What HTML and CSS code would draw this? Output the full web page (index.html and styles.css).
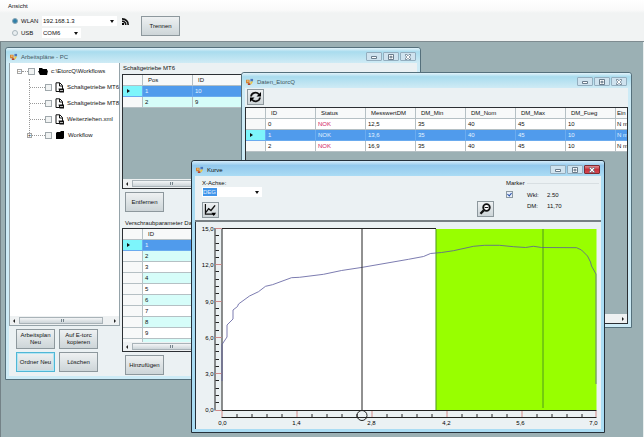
FILE: index.html
```html
<!DOCTYPE html>
<html lang="de">
<head>
<meta charset="utf-8">
<title>EtorcQ</title>
<link rel="stylesheet" href="styles.css">
</head>
<body>
<svg class="defs" aria-hidden="true">
  <symbol id="app" viewBox="0 0 9 8"><path fill="#d9822b" d="M0 2h4v4H0z"/><path fill="#f3e3b0" d="M1 3h2v1H1z"/><path fill="#b4432c" d="M2 6h3v2H2z"/><path fill="#4a78c0" d="M5 1h3v3H5z"/><path fill="#f0c63c" d="M5 4h3l-2 3H5z"/></symbol>
  <symbol id="folder" viewBox="0 0 10 8"><path d="M1 2l1-1h3l1-1h3v7L8 8H1z"/></symbol>
  <symbol id="folder-open" viewBox="0 0 10 8"><path d="M1 3V1h3l1 1h4v1.500h1L9 8H2L0 4h1z"/></symbol>
  <symbol id="file" viewBox="0 0 9 11"><path fill="#fff" stroke="#111" d="M1 .8h3.800L7.500 3.500V9.500H1z"/><path fill="none" stroke="#111" d="M4.500 1v3h3"/><path fill="#111" d="M3.500 6.500H9V10.500H4.500z"/><path stroke="#fff" stroke-width=".7" d="M5 8.500h3"/></symbol>
  <symbol id="min" viewBox="0 0 8 6"><path fill="#fff" stroke="#5c6f80" stroke-width=".9" d="M1.500 2.500h5v2h-5z"/></symbol>
  <symbol id="max" viewBox="0 0 8 6"><path fill="#fff" stroke="#5c6f80" stroke-width=".9" d="M1.500.5h5v5h-5zM3 2.300h2v1.500H3z"/></symbol>
  <symbol id="close" viewBox="0 0 8 6"><path fill="#fff" stroke="#5c6f80" stroke-width=".8" d="M1.500.5h1.300L4 1.700 5.200.5h1.300v1L5.300 3l1.200 1.500v1H5.200L4 4.300 2.800 5.500H1.500v-1L2.700 3 1.500 1.500z"/></symbol>
</svg>

<header class="top">
  <nav><a class="menu" href="#">Ansicht</a></nav>
  <div class="connect">
    <div class="ports">
      <div class="port">
        <input type="radio" name="port" id="wlan" checked><label for="wlan">WLAN</label>
        <span class="combo wide"><select aria-label="IP-Adresse"><option>192.168.1.3</option></select></span>
        <svg class="signal" viewBox="0 0 7 7"><path d="M0 5h2v2H0z"/><path fill="none" stroke="#111" stroke-width="1.600" d="M0 3.200Q3.700 3.300 3.800 7M0 .9Q6 1.200 6.200 7"/></svg>
      </div>
      <div class="port">
        <input type="radio" name="port" id="usb"><label for="usb">USB</label>
        <span class="combo"><select aria-label="USB-Port"><option>COM6</option></select></span>
      </div>
    </div>
    <button class="btn">Trennen</button>
  </div>
</header>

<main class="desktop">
  <section class="window plans">
    <div class="titlebar"><svg class="app"><use href="#app"/></svg><span>Arbeitspläne - PC</span>
      <div class="caption"><button aria-label="Minimieren"><svg><use href="#min"/></svg></button><button aria-label="Maximieren"><svg><use href="#max"/></svg></button><button aria-label="Schließen"><svg><use href="#close"/></svg></button></div></div>
    <div class="client split">
      <div class="left">
        <div class="treebox">
          <ul class="tree">
            <li><i class="twist">−</i><i class="dash"></i><input type="checkbox" id="t0"><svg class="ico"><use href="#folder-open"/></svg><label for="t0">c:\EtorcQ\Workflows</label>
              <ul>
                <li><i class="dash long"></i><input type="checkbox" id="t1"><svg class="ico file"><use href="#file"/></svg><label for="t1">Schaltgetriebe MT6</label></li>
                <li><i class="dash long"></i><input type="checkbox" id="t2"><svg class="ico file"><use href="#file"/></svg><label for="t2">Schaltgetriebe MT8</label></li>
                <li><i class="dash long"></i><input type="checkbox" id="t3"><svg class="ico file"><use href="#file"/></svg><label for="t3">Weiterziehen.xml</label></li>
                <li class="last"><i class="twist">+</i><i class="dash mid"></i><input type="checkbox" id="t4"><svg class="ico"><use href="#folder"/></svg><label for="t4">Workflow</label></li>
              </ul>
            </li>
          </ul>
          <div class="scroll"><i class="prev"></i><b></b><i class="next"></i></div>
        </div>
        <div class="actions">
          <button class="btn">Arbeitsplan<br>Neu</button><button class="btn">Auf E-torc<br>kopieren</button>
          <button class="btn focus">Ordner Neu</button><button class="btn">Löschen</button>
        </div>
      </div>
      <div class="right">
        <h2>Schaltgetriebe MT6</h2>
        <div class="gridbox steps">
          <table class="grid">
            <colgroup><col class="mark"><col class="c"><col class="c"><col></colgroup>
            <thead><tr><th></th><th>Pos</th><th>ID</th><th></th></tr></thead>
            <tbody><tr class="sel"><td></td><td>1</td><td>10</td><td></td></tr><tr class="alt"><td></td><td>2</td><td>9</td><td></td></tr></tbody>
          </table>
          <div class="scroll"><i class="prev"></i><b></b><i class="next"></i></div>
        </div>
        <button class="btn">Entfernen</button>
        <h2 class="inset">Verschraubparameter Daten</h2>
        <div class="gridbox params">
          <div class="rows">
          <table class="grid">
            <colgroup><col class="mark"><col></colgroup>
            <thead><tr><th></th><th>ID</th></tr></thead>
            <tbody><tr class="sel"><td></td><td>1</td></tr><tr class="alt"><td></td><td>2</td></tr><tr><td></td><td>3</td></tr><tr class="alt"><td></td><td>4</td></tr><tr><td></td><td>5</td></tr><tr class="alt"><td></td><td>6</td></tr><tr><td></td><td>7</td></tr><tr class="alt"><td></td><td>8</td></tr><tr><td></td><td>9</td></tr><tr class="alt"><td></td><td>10</td></tr></tbody>
          </table>
          </div>
          <div class="scroll"><i class="prev"></i><b></b><i class="next"></i></div>
        </div>
        <button class="btn">Hinzufügen</button>
      </div>
    </div>
  </section>

  <section class="window data">
    <div class="titlebar"><svg class="app"><use href="#app"/></svg><span>Daten_EtorcQ</span>
      <div class="caption"><button aria-label="Minimieren"><svg><use href="#min"/></svg></button><button aria-label="Maximieren"><svg><use href="#max"/></svg></button><button aria-label="Schließen"><svg><use href="#close"/></svg></button></div></div>
    <div class="client stack">
      <button class="btn tool" aria-label="Aktualisieren"><svg viewBox="0 0 12 12"><path fill="none" stroke="#111" stroke-width="1.800" d="M1.500 5.500C2 1.500 7 .5 9.500 3.300M10.500 6.500C10 10.500 5 11.500 2.500 8.700"/><path d="M11.500 1v4.500H7zM.5 11V6.500H5z"/></svg></button>
      <div class="gridbox">
        <table class="grid">
          <colgroup><col class="mark"><col class="c"><col class="c"><col class="c"><col class="c"><col class="c"><col class="c"><col class="c"><col></colgroup>
          <thead><tr><th></th><th>ID</th><th>Status</th><th>MesswertDM</th><th>DM_Min</th><th>DM_Nom</th><th>DM_Max</th><th>DM_Fueg</th><th class="edge">Ein</th></tr></thead>
          <tbody>
            <tr><td></td><td>0</td><td class="nok">NOK</td><td>12,5</td><td>35</td><td>40</td><td>45</td><td>10</td><td class="edge">N m</td></tr>
            <tr class="sel"><td></td><td>1</td><td>NOK</td><td>13,6</td><td>35</td><td>40</td><td>45</td><td>10</td><td class="edge">N m</td></tr>
            <tr><td></td><td>2</td><td class="nok">NOK</td><td>16,9</td><td>35</td><td>40</td><td>45</td><td>10</td><td class="edge">N m</td></tr>
          </tbody>
        </table>
        <div class="scroll"><i class="prev"></i><b></b><i class="next"></i></div>
      </div>
    </div>
  </section>

  <section class="window curve">
    <div class="titlebar"><svg class="app"><use href="#app"/></svg><span>Kurve</span>
      <div class="caption"><button aria-label="Minimieren"><svg><use href="#min"/></svg></button><button aria-label="Maximieren"><svg><use href="#max"/></svg></button><button class="hot" aria-label="Schließen"><svg><use href="#close"/></svg></button></div></div>
    <div class="client stack">
      <div class="tools">
        <div class="axis">
          <label for="axis">X-Achse:</label>
          <span class="combo"><select id="axis"><option>DEG</option></select></span>
          <button class="btn tool" aria-label="Kurve"><svg viewBox="0 0 14 13"><path fill="none" stroke="#111" stroke-width="1.300" d="M1.500 0v11H12"/><path fill="none" stroke="#111" stroke-width="1.500" d="M2 9l3-4 2.500 2L12 1.500"/><path d="M8 9.500h5L10.500 13z"/></svg></button>
        </div>
        <button class="btn tool" aria-label="Verkleinern"><svg viewBox="0 0 12 12"><circle cx="7" cy="4.500" r="3.300" fill="#fff" stroke="#111" stroke-width="1.800"/><path stroke="#111" d="M5.200 4.500h3.600"/><path stroke="#111" stroke-width="2.400" d="M4.300 7.300L1 10.800"/></svg></button>
        <fieldset>
          <legend>Marker</legend>
          <input type="checkbox" class="ticked" checked aria-label="Marker">
          <dl><dt>Wkl:</dt><dd>2.50</dd><dt>DM:</dt><dd>11,70</dd></dl>
        </fieldset>
      </div>
      <svg class="chart" viewBox="195 222 404 207" role="img" aria-label="Kurve">
        <path fill="#fff" d="M221 229h213v181H221z"/>
        <path fill="#98ff00" d="M434.500 229H595v181H434.500z"/>
        <path class="line" d="M220.500 410V228.500H434.500M213.500 228V410.500M220 410.500H595M220 417.500H595"/>
        <path class="minor" d="M214 235.500h3.500M214 243.500h3.500M214 250.500h3.500M214 257.500h3.500M214 271.500h3.500M214 279.500h3.500M214 286.500h3.500M214 293.500h3.500M214 308.500h3.500M214 315.500h3.500M214 322.500h3.500M214 330.500h3.500M214 344.500h3.500M214 351.500h3.500M214 359.500h3.500M214 366.500h3.500M214 380.500h3.500M214 388.500h3.500M214 395.500h3.500M214 402.500h3.500"/>
        <path class="minor" d="M235.500 414v3M250.500 414v3M265.500 414v3M280.500 414v3M310.500 414v3M325.500 414v3M340.500 414v3M355.500 414v3M385.500 414v3M400.500 414v3M415.500 414v3M430.500 414v3M460.500 414v3M475.500 414v3M490.500 414v3M505.500 414v3M535.500 414v3M550.500 414v3M565.500 414v3M580.500 414v3"/>
        <path class="major" d="M214 228.500h6M214 264.500h6M214 301.500h6M214 337.500h6M214 373.500h6M214 410.500h6M220.500 411v6M295.500 411v6M370.500 411v6M445.500 411v6M520.500 411v6M594.500 411v6"/>
        <path stroke="#4f9a1c" d="M434.500 229V410M541.500 229V408"/>
        <path class="data-line" d="M220.500 381V344.500L225.500 337V325L231.500 319V310L236 306.500 237 304 248 296 257 291.700 264 286.300 271 284.700 290 277.700 298 277.300 322 274.300 340 270.500 361 267.300 407 259.300 422 256.500 429 253.500 440 252.500 452 250.700 472 246.300 483 245.300H498L512 246.700 524 247.500 532 246.300 540 247.500 575 247.700 580 250 586 256 589 262 590 266 594.500 274V384"/>
        <path class="line" d="M360.500 229V410"/>
        <circle class="line" cx="360.500" cy="415.500" r="5"/>
        <g text-anchor="end"><text x="212" y="231">15,0</text><text x="212" y="267">12,0</text><text x="212" y="304">9,0</text><text x="212" y="340">6,0</text><text x="212" y="376">3,0</text><text x="212" y="412">0,0</text></g>
        <g text-anchor="middle"><text x="221" y="425">0,0</text><text x="295" y="425">1,4</text><text x="370" y="425">2,8</text><text x="445" y="425">4,2</text><text x="519" y="425">5,6</text><text x="592" y="425">7,0</text></g>
      </svg>
    </div>
  </section>
</main>
</body>
</html>
```
FILE: styles.css
```css
* { box-sizing: border-box; }
body {
  margin: 0;
  min-height: 100vh;
  display: flex;
  flex-direction: column;
  overflow: hidden;
  background: #9bb0b4;
  color: #111;
  font: 6px/8px "Liberation Sans", sans-serif;
}
input, button, select { margin: 0; padding: 0; font: inherit; color: inherit; }
ul, dl, dd, h2 { margin: 0; padding: 0; font: inherit; list-style: none; }
i { font-style: normal; }
.defs { display: none; }

.top { padding: 2px 8px 3px; background: linear-gradient(#fff, #fafafa 10px, #f1f3f3 13px); border-bottom: 1px solid #7e8b90; }
.menu { display: block; color: inherit; text-decoration: none; }
.connect { display: flex; align-items: flex-start; gap: 12px; padding: 6px 0 0 3px; }
.ports { display: flex; flex-direction: column; gap: 2px; }
.port { display: flex; align-items: center; height: 10px; }
.port label { width: 21px; padding-left: 3px; margin-right: 3px; }
.port input {
  appearance: none;
  width: 6px;
  height: 6px;
  margin-left: 1px;
  border: 1px solid #a9b6bc;
  border-radius: 50%;
  background: #e9eef0;
}
.port input:checked { background: #2f7fa8; border-color: #8ba6b4; }
.signal { width: 7px; height: 7px; margin-left: 5px; }

.combo { position: relative; display: block; width: 39px; height: 10px; background: #fff; }
.combo.wide { width: 75px; }
.combo select {
  appearance: none;
  display: block;
  width: 100%;
  height: 10px;
  padding-left: 1px;
  border: 0;
  background: transparent;
  line-height: 10px;
}
.combo::after {
  content: "";
  position: absolute;
  top: 4px;
  right: 3px;
  border: 2px solid transparent;
  border-top: 3px solid #111;
  border-bottom: 0;
}

.btn {
  min-width: 39px;
  height: 20px;
  padding: 0;
  border: 1px solid #8d989d;
  background: linear-gradient(#eef1f2, #dde3e5 50%, #cdd5d8);
  line-height: 7px;
  text-align: center;
}
.btn.focus { border-color: #4fb7d6; box-shadow: inset 0 0 0 1px #b4e4f2; }
.btn.tool { min-width: 0; width: 17px; height: 16px; display: grid; place-items: center; }
.btn.tool svg { width: 13px; height: 12px; }

.desktop { position: relative; flex: 1; border-left: 1px solid #748287; border-right: 1px solid #e8eeee; }
.window {
  position: absolute;
  display: flex;
  flex-direction: column;
  padding: 0 3px 3px;
  border: 1px solid #55707c;
  border-radius: 3px 3px 0 0;
  background: #cdebf6;
}
.plans { left: 4px; top: 5px; width: 416px; height: 333px; }
.data { left: 240px; top: 30px; width: 391px; height: 256px; }
.curve { left: 190px; top: 118px; width: 414px; height: 273px; border-color: #24303a; background: #aadcf3; }
.titlebar {
  display: flex;
  align-items: center;
  flex: none;
  height: 15px;
  margin: 0 -3px;
  padding: 2px 4px 0;
  gap: 3px;
  border-radius: 3px 3px 0 0;
  background: linear-gradient(#e3f3fa, #a9dcee 25%, #cfebf5);
  color: #3d5560;
}
.curve .titlebar { background: linear-gradient(#d5ecfa, #93c9ed 30%, #abdcf4); color: #111; }
.app { width: 8px; height: 7px; }
.caption { display: flex; margin-left: auto; gap: 1px; }
.caption button { display: grid; place-items: center; width: 16px; height: 9px; border: 1px solid #93aebf; border-radius: 1px; background: #cfe3ef; }
.caption svg { width: 8px; height: 6px; }
.caption .hot { background: linear-gradient(#e08b90, #c8323c 50%, #d24750); border-color: #7c2b33; }
.client { flex: 1; min-height: 0; background: #ebf1f3; }
.stack { display: flex; flex-direction: column; }

.split { display: grid; grid-template-columns: 111px 1fr; gap: 2px; }
.left, .right { display: flex; flex-direction: column; min-width: 0; min-height: 0; }
.treebox { display: flex; flex-direction: column; height: 263px; border: 1px solid #95a3a9; border-top: 0; background: #fff; }
.tree { flex: 1; padding: 0 0 0 7px; }
.tree li { height: 16px; white-space: nowrap; line-height: 16px; }
.tree ul { height: 56px; margin-left: 12px; border-left: 1px dotted #999; }
.tree .last { margin-left: -3px; }
.twist { display: inline-block; width: 5px; height: 5px; border: 1px solid #a4a4a4; background: #fff; line-height: 3px; font-size: 5px; text-align: center; vertical-align: middle; }
.dash { display: inline-block; width: 6px; border-top: 1px dotted #999; vertical-align: middle; }
.dash.mid { width: 13px; }
.dash.long { width: 15px; }
.tree input { appearance: none; width: 7px; height: 7px; border: 1px solid #a0a8ac; background: #f1f3f3; vertical-align: middle; }
.ico { width: 10px; height: 8px; margin: 0 3px; vertical-align: middle; }
.ico.file { width: 9px; height: 11px; }
.actions { display: grid; grid-template-columns: 39px 39px; gap: 3px 4px; padding: 3px 0 0 7px; }

.scroll { display: flex; align-items: center; flex: none; height: 9px; padding: 0 3px; gap: 4px; background: #eef1f2; margin-top: auto; }
.scroll b { position: relative; width: 84px; height: 7px; border: 1px solid #a9b3b8; background: linear-gradient(#f3f5f6, #cdd5d9); }
.scroll b::after { content: ""; position: absolute; top: 1px; left: 50%; width: 4px; height: 3px; background: repeating-linear-gradient(90deg, #75848c 0 1px, #dfe4e6 1px 2px); }
.scroll i { border: 2px solid transparent; }
.scroll .prev { border-right-color: #222; border-left: 0; }
.scroll .next { border-left-color: #222; border-right: 0; margin-left: auto; }
.right .scroll b { width: 76px; }

.right { padding-right: 3px; }
.right h2 { padding: 1px 0 2px 1px; }
.right h2.inset { padding: 7px 0 1px 3px; }
.right .btn { align-self: flex-start; flex: none; margin: 3px 0 0 3px; }
.gridbox { display: flex; flex-direction: column; border: 1px solid #2b2f33; background: #9bb0b4; overflow: hidden; }
.steps { height: 115px; }
.params { height: 124px; }
.params .rows { flex: 1; min-height: 0; overflow: hidden; }
.data .gridbox { flex: 1; min-height: 0; }
.data .btn.tool { margin: 1px 0 2px 2px; }
.data .tool, .curve .tool { flex: none; }

.grid { width: 100%; table-layout: fixed; border-spacing: 0; background: #fff; }
.grid .mark { width: 20px; }
.grid .c { width: 50px; }
.grid th, .grid td { height: 11px; padding: 0 0 0 2px; border-right: 1px solid #b5c0c4; border-bottom: 1px solid #b5c0c4; text-align: left; font-weight: normal; white-space: nowrap; }
.grid th { padding-left: 5px; background: #f7f9f9; }
.grid td:first-child { background: #f7f9f9; }
.grid .edge { padding-left: 1px; border-right: 0; }
.grid .alt td + td { background: #d6fdf9; }
.grid .sel td { background: #509bec; border-color: #6aabef; color: #e4f3ff; }
.grid .sel td:first-child { background: #7df5fb; }
.grid .sel td:first-child::before { content: ""; display: block; margin-left: 2px; width: 0; border: 2px solid transparent; border-left: 3px solid #111; border-right: 0; }
.grid .nok { color: #d01860; }

.tools { display: flex; flex: none; height: 46px; padding: 3px 2px 0 7px; border-bottom: 2px solid #777f83; }
.axis { display: flex; flex-direction: column; width: 60px; }
.axis .combo { width: 60px; }
.axis select { background: linear-gradient(#3f94ea, #3f94ea) 1px 1px / 14px 8px no-repeat; color: #e4f2fd; }
.axis .btn { margin-top: 5px; }
.tools > .btn { margin: 22px 0 0 215px; }
fieldset { display: flex; align-items: flex-start; flex: 1; margin: 0 0 0 8px; padding: 4px 0 0 4px; border: 0; min-width: 0; }
legend { display: flex; align-items: center; width: 100%; padding: 0; gap: 2px; }
legend::after { content: ""; flex: 1; border-top: 1px solid #d8dfe2; }
.ticked { appearance: none; position: relative; width: 7px; height: 7px; border: 1px solid #8d9aa2; background: #e7eef8; }
.ticked::after { content: ""; position: absolute; left: 1px; top: 0; width: 2px; height: 3px; border: solid #2850a8; border-width: 0 1px 1px 0; transform: rotate(40deg); }
dl { display: grid; grid-template-columns: 20px 30px; gap: 3px 0; padding-left: 14px; }
.chart { display: block; width: 100%; flex: 1; min-height: 0; border-left: 1px solid #24303a; font-size: 6px; }
.line { fill: none; stroke: #222; }
.minor { stroke: #222; }
.major { stroke: #d08a8a; }
.data-line { fill: none; stroke: #5a5a9c; stroke-width: .8; }
```
